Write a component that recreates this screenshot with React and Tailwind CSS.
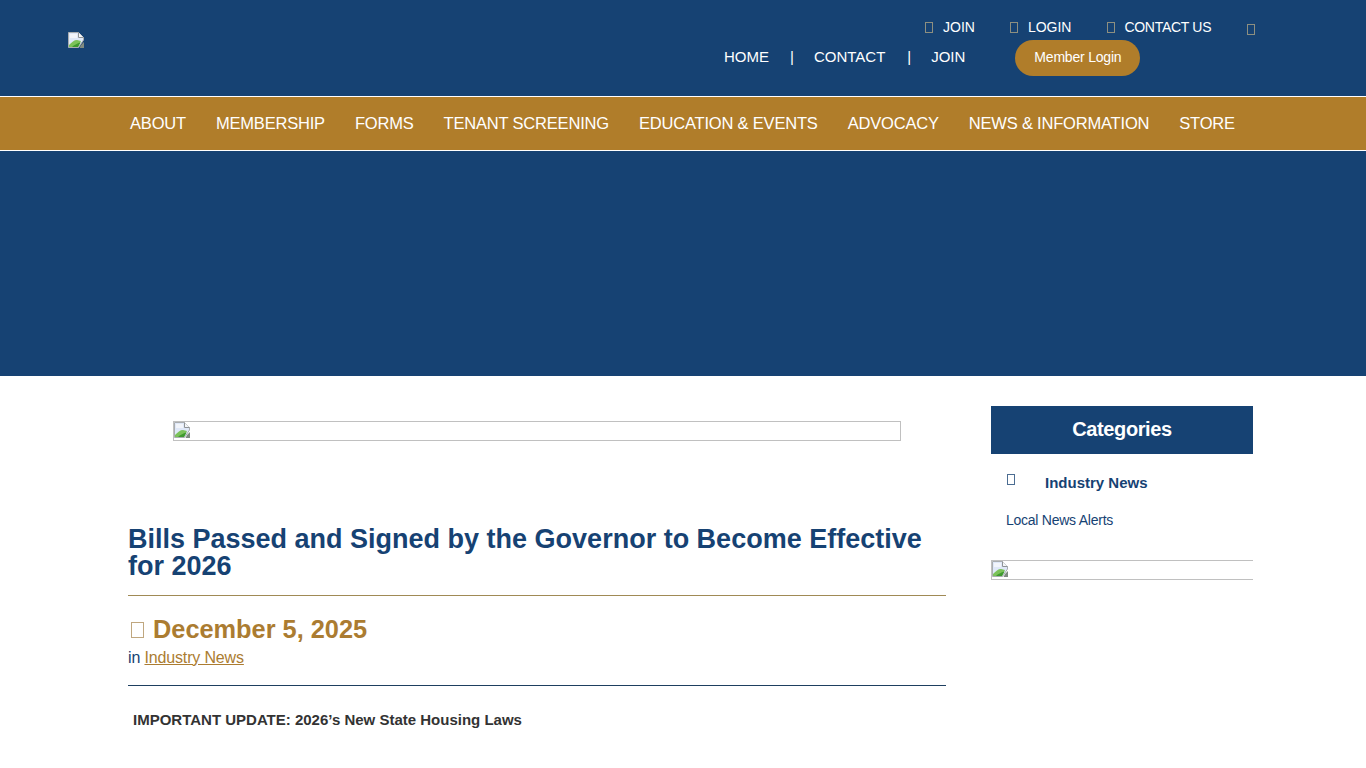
import React from 'react';

const navItems = ['ABOUT', 'MEMBERSHIP', 'FORMS', 'TENANT SCREENING', 'EDUCATION & EVENTS', 'ADVOCACY', 'NEWS & INFORMATION', 'STORE'];

function BrokenImage() {
  return (
    <svg width="16" height="16" viewBox="0 0 16 16" className="block shrink-0">
      <path d="M0.5 0.5H10.5L15.5 5.5V8L10.5 15.5H0.5Z" fill="#dfe8f8" stroke="#a9adb0" />
      <path d="M10.5 0.5V5.5H15.5" fill="#f4f6f8" stroke="#8f9396" />
      <path d="M2 2H9V6H2Z" fill="#f2f5fb" />
      <path d="M1 15V13C4 10 6 8 9 8L13 9L10 15Z" fill="#7cc25a" />
      <path d="M4 15C6 13 9 11.5 12.5 10.5L10 15Z" fill="#3f9a2e" />
      <path d="M13 13L16 10V16H11.5Z" fill="#7f8a80" />
    </svg>
  );
}

function Tofu({ className }) {
  return <span className={`block border ${className}`} />;
}

function TopLink({ label, className, iconClass }) {
  return (
    <a className={`flex items-center ${className}`}>
      <Tofu className={`w-[8px] h-[11px] mt-[1px] border-[#8d8f80] ${iconClass}`} />
      <span>{label}</span>
    </a>
  );
}

export default function App() {
  return (
    <div className="h-[768px] overflow-hidden bg-white font-['Liberation_Sans',Arial,sans-serif]">
      <header className="h-[97px] bg-[#164273] border-b border-white flex justify-between">
        <div className="pl-[68px] pt-[32px]">
          <BrokenImage />
        </div>
        <div className="w-[642px] text-white">
          <div className="h-[40px] pt-[18px] flex items-start text-[14px] leading-[18px]">
            <TopLink label="JOIN" className="ml-[201px]" iconClass="mr-[10px]" />
            <TopLink label="LOGIN" className="ml-[35px]" iconClass="mr-[10px]" />
            <span className="tracking-[-0.3px]">
              <TopLink label="CONTACT US" className="ml-[36px]" iconClass="mr-[9px]" />
            </span>
            <Tofu className="w-[8px] h-[11px] mt-[6px] ml-[36px] border-[#8d8f80]" />
          </div>
          <div className="flex items-center h-[36px] text-[15px]">
            <a className="mb-[2px]">HOME</a>
            <span className="ml-[21px] mb-[2px]">|</span>
            <a className="ml-[20px] mb-[2px]">CONTACT</a>
            <span className="ml-[22px] mb-[2px]">|</span>
            <a className="ml-[20px] mb-[2px]">JOIN</a>
            <a className="ml-[50px] w-[125px] h-[36px] pb-[2px] rounded-[18px] bg-[#b07d2a] flex items-center justify-center text-[14px] tracking-[-0.2px]">
              Member Login
            </a>
          </div>
        </div>
      </header>

      <nav className="h-[54px] bg-[#b07d2a] border-b border-white flex items-center pl-[130px] gap-[30px] text-white text-[16.5px] tracking-[-0.19px]">
        {navItems.map((item) => (
          <a key={item}>{item}</a>
        ))}
      </nav>

      <div className="h-[225px] bg-[#164273]" />

      <div className="flex pl-[128px] pt-[30px]">
        <main className="w-[818px]">
          <div className="ml-[45px] mt-[15px] w-[728px] h-[20px] border border-[#c0c0c0]">
            <BrokenImage />
          </div>
          <h1 className="mt-[85px] text-[27px] leading-[27px] font-bold text-[#164273]">
            Bills Passed and Signed by the Governor to Become Effective for 2026
          </h1>
          <div className="mt-[15px] border-t border-[#a08a55] pt-[19px]">
            <div className="flex items-center text-[25.35px] leading-[28px] font-bold text-[#ab7c31]">
              <Tofu className="w-[13px] h-[16px] ml-[3px] mr-[9px] mt-[2px] border-[#c0a77f]" />
              December 5, 2025
            </div>
            <p className="mt-[6px] text-[16px] leading-[18px] text-[#164273] tracking-[-0.15px]">
              in <a className="underline text-[#ab7c31]">Industry News</a>
            </p>
          </div>
          <div className="mt-[18px] border-t border-[#1e3f60] pt-[26px] pl-[5px]">
            <p className="text-[15px] leading-[16px] font-bold text-[#333333]">
              IMPORTANT UPDATE: 2026’s New State Housing Laws
            </p>
          </div>
        </main>

        <aside className="ml-[45px] w-[262px]">
          <h2 className="h-[48px] pb-[2px] bg-[#164273] flex items-center justify-center text-[20px] tracking-[-0.4px] font-bold text-white">
            Categories
          </h2>
          <div className="flex items-start mt-[19px] pl-[16px]">
            <Tofu className="w-[8px] h-[11px] mt-[1px] border-[#4c6d92]" />
            <a className="ml-[30px] mt-[1px] text-[15px] leading-[18px] font-bold text-[#164273]">Industry News</a>
          </div>
          <a className="block mt-[20px] pl-[15px] text-[14px] leading-[16px] tracking-[-0.25px] text-[#164273]">Local News Alerts</a>
          <div className="mt-[32px] h-[20px] border border-r-0 border-[#c0c0c0]">
            <BrokenImage />
          </div>
        </aside>
      </div>
    </div>
  );
}
